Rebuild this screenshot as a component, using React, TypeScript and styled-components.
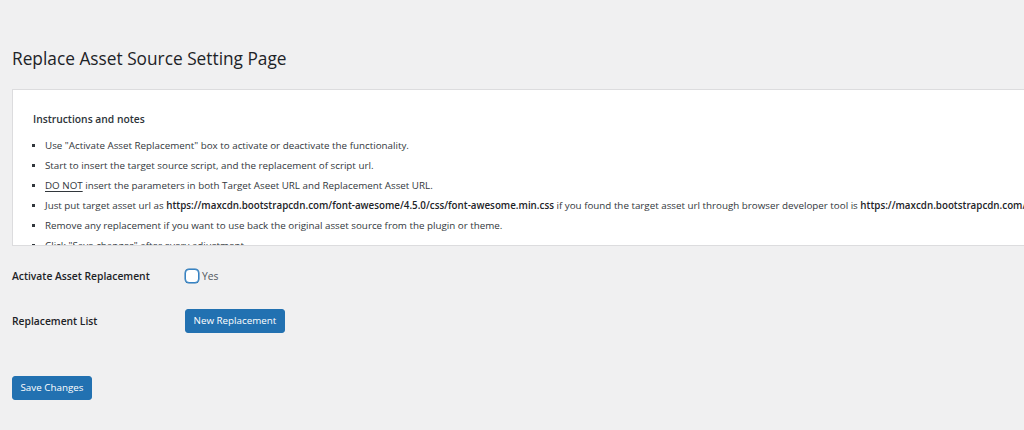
import styled, { createGlobalStyle } from "styled-components";

const GlobalStyle = createGlobalStyle`
  html, body {
    margin: 0;
    padding: 0;
    background: #f0f0f1;
    overflow: hidden;
  }
  body {
    font-family: "Open Sans", "Noto Sans", sans-serif;
    color: #3c434a;
    font-size: 12px;
  }
`;

const Wrap = styled.div`
  padding: 0 0 0 12px;
  width: 1100px;
`;

const Title = styled.h1`
  margin: 0;
  padding: 46px 0 0;
  font-size: 17.3px;
  font-weight: 400;
  line-height: 26px;
  color: #1d2327;
`;

const NotesBox = styled.div`
  margin-top: 17px;
  height: 157px;
  overflow: hidden;
  background: #fff;
  border: 1px solid #dcdcde;
  padding: 20px 20px 0;
  box-sizing: border-box;
`;

const NotesTitle = styled.p`
  margin: 0 0 8px;
  font-size: 10.3px;
  font-weight: 600;
  line-height: 18px;
  color: #2c3338;
`;

const NotesList = styled.ul`
  margin: 0;
  padding: 0 0 0 12px;
  list-style: square;
  font-size: 9.8px;
  line-height: 20px;
  color: #32373c;
  white-space: nowrap;

  li::marker {
    font-size: 8px;
  }
  b {
    font-weight: 600;
    color: #1d2327;
  }
  u {
    text-underline-offset: 2px;
  }
`;

const Row = styled.div<{ $gap: number }>`
  display: flex;
  align-items: center;
  margin-top: ${(p) => p.$gap}px;
`;

const Label = styled.div`
  width: 173px;
  font-size: 10.3px;
  font-weight: 600;
  color: #1d2327;
`;

const CheckLabel = styled.label`
  display: flex;
  align-items: center;
  gap: 3px;
  font-size: 10.3px;
  color: #50575e;
`;

const Check = styled.span`
  display: inline-block;
  width: 12px;
  height: 12px;
  border: 1.5px solid #3582c4;
  border-radius: 4px;
  background: #fff;
  box-shadow: 0 0 0 0.5px #2271b1;
`;

const Button = styled.button`
  height: 24px;
  padding: 0 7.5px;
  background: #2271b1;
  border: 1px solid #2271b1;
  border-radius: 3px;
  color: #fff;
  font-family: "Open Sans", "Noto Sans", sans-serif;
  font-size: 9.8px;
  line-height: 22px;
  cursor: pointer;
`;

export default function App() {
  return (
    <>
      <GlobalStyle />
      <Wrap>
        <Title>Replace Asset Source Setting Page</Title>
        <NotesBox>
          <NotesTitle>Instructions and notes</NotesTitle>
          <NotesList>
            <li>Use "Activate Asset Replacement" box to activate or deactivate the functionality.</li>
            <li>Start to insert the target source script, and the replacement of script url.</li>
            <li>
              <u>DO NOT</u> insert the parameters in both Target Aseet URL and Replacement Asset URL.
            </li>
            <li>
              Just put target asset url as <b>https://maxcdn.bootstrapcdn.com/font-awesome/4.5.0/css/font-awesome.min.css</b> if you
              found the target asset url through browser developer tool is{" "}
              <b>https://maxcdn.bootstrapcdn.com/font-awesome/4.5.0/css/font-awesome.min.css?ver=4.5.0</b>
            </li>
            <li>Remove any replacement if you want to use back the original asset source from the plugin or theme.</li>
            <li>Click "Save changes" after every adjustment.</li>
          </NotesList>
        </NotesBox>
        <Row $gap={23}>
          <Label>Activate Asset Replacement</Label>
          <CheckLabel>
            <Check />
            Yes
          </CheckLabel>
        </Row>
        <Row $gap={26}>
          <Label>Replacement List</Label>
          <Button>New Replacement</Button>
        </Row>
        <Row $gap={43}>
          <Button>Save Changes</Button>
        </Row>
      </Wrap>
    </>
  );
}
